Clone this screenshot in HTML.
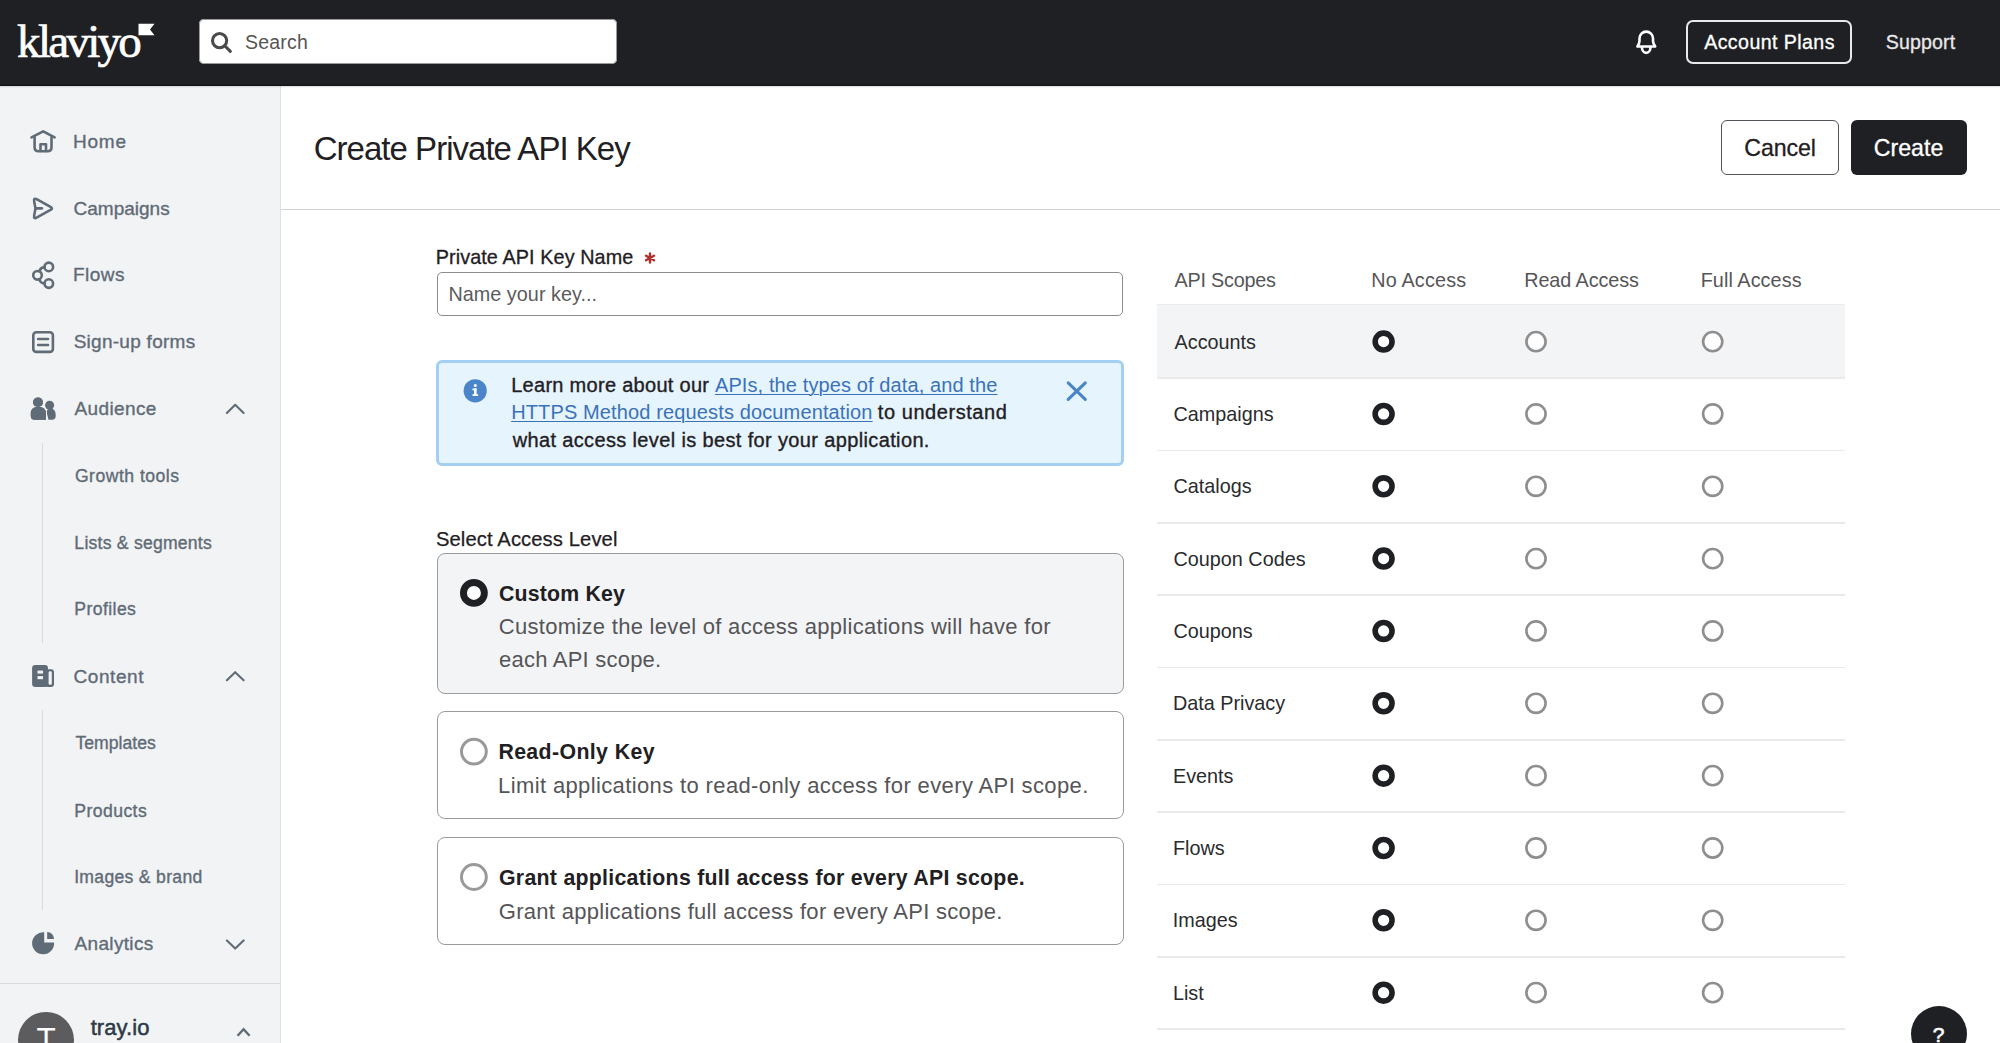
<!DOCTYPE html>
<html><head><meta charset="utf-8"><style>
html,body{margin:0;padding:0;width:2000px;height:1043px;overflow:hidden;background:#fff}
.t{position:absolute;white-space:nowrap}
</style></head><body>
<div style="position:absolute;left:0;top:0;width:2000px;height:86px;background:#1f2023;box-shadow:inset 0 -2px 1px -1px #111214"></div>
<div class="t " style="left:17.10px;top:11.50px;font:400 47px/59px 'Liberation Serif', serif;letter-spacing:-2.715px;color:#ffffff;-webkit-text-stroke:0.7px #fff">klaviyo</div>
<svg style="position:absolute;left:0;top:0" width="200" height="86"><polygon points="138.5,23.7 154.5,23.7 150,29.5 154.5,35.2 138.5,35.2" fill="#fff"/></svg>
<div style="position:absolute;left:199px;top:19.3px;width:417.5px;height:44.3px;background:#fff;border-radius:5px;box-shadow:0 0 0 1px #9a9a9a inset"></div>
<svg style="position:absolute;left:205px;top:26px" width="32" height="32"><circle cx="14.6" cy="14.6" r="7.1" fill="none" stroke="#4a4a4a" stroke-width="3.1"/><line x1="20" y1="20" x2="25.3" y2="25.3" stroke="#4a4a4a" stroke-width="3.1" stroke-linecap="round"/></svg>
<div class="t " style="left:245.11px;top:29.50px;font:400 19.5px/25px 'Liberation Sans', sans-serif;letter-spacing:0.173px;color:#555555;">Search</div>
<svg style="position:absolute;left:1630px;top:25px" width="32" height="32"><path d="M9.5 16 L9.5 13.35 A6.75 6.75 0 0 1 23 13.35 L23 16 Q23 18.3 25.2 21.5 L7.4 21.5 Q9.5 18.3 9.5 16 Z" fill="none" stroke="#fff" stroke-width="2.6" stroke-linejoin="round"/><path d="M11.9 22 C11.9 25.6 13.9 27.9 16.2 27.9 C18.5 27.9 20.5 25.6 20.5 22" fill="none" stroke="#fff" stroke-width="2.6"/></svg>
<div style="position:absolute;left:1686px;top:20px;width:166px;height:44px;box-sizing:border-box;border:2px solid #e9e9e9;border-radius:7px"></div>
<div class="t " style="left:1704.16px;top:29.70px;font:400 19.6px/25px 'Liberation Sans', sans-serif;letter-spacing:0.421px;color:#ffffff;-webkit-text-stroke:0.3px #fff">Account Plans</div>
<div class="t " style="left:1885.81px;top:29.70px;font:400 19.6px/25px 'Liberation Sans', sans-serif;letter-spacing:0.131px;color:#e9e9e9;-webkit-text-stroke:0.3px #e9e9e9">Support</div>
<div style="position:absolute;left:0;top:86px;width:280px;height:957px;background:#f2f3f5;border-right:1px solid #dde0e4"></div>
<div style="position:absolute;left:0;top:86px;width:2000px;height:2px;background:linear-gradient(rgba(0,0,0,0.13),rgba(0,0,0,0))"></div>
<div class="t " style="left:72.94px;top:129.80px;font:400 19px/24px 'Liberation Sans', sans-serif;letter-spacing:0.807px;color:#5f6b76;-webkit-text-stroke:0.35px #5f6b76">Home</div>
<div class="t " style="left:73.54px;top:196.50px;font:400 19px/24px 'Liberation Sans', sans-serif;letter-spacing:0.000px;color:#5f6b76;-webkit-text-stroke:0.35px #5f6b76">Campaigns</div>
<div class="t " style="left:72.94px;top:263.40px;font:400 19px/24px 'Liberation Sans', sans-serif;letter-spacing:0.457px;color:#5f6b76;-webkit-text-stroke:0.35px #5f6b76">Flows</div>
<div class="t " style="left:73.64px;top:330.20px;font:400 19px/24px 'Liberation Sans', sans-serif;letter-spacing:0.273px;color:#5f6b76;-webkit-text-stroke:0.35px #5f6b76">Sign-up forms</div>
<div class="t " style="left:74.46px;top:397.10px;font:400 19px/24px 'Liberation Sans', sans-serif;letter-spacing:0.393px;color:#5f6b76;-webkit-text-stroke:0.35px #5f6b76">Audience</div>
<div class="t " style="left:73.54px;top:664.50px;font:400 19px/24px 'Liberation Sans', sans-serif;letter-spacing:0.560px;color:#5f6b76;-webkit-text-stroke:0.35px #5f6b76">Content</div>
<div class="t " style="left:74.46px;top:932.20px;font:400 19px/24px 'Liberation Sans', sans-serif;letter-spacing:0.349px;color:#5f6b76;-webkit-text-stroke:0.35px #5f6b76">Analytics</div>
<div class="t " style="left:74.91px;top:464.60px;font:400 17.6px/22px 'Liberation Sans', sans-serif;letter-spacing:0.484px;color:#5f6b76;-webkit-text-stroke:0.35px #5f6b76">Growth tools</div>
<div class="t " style="left:74.36px;top:531.80px;font:400 17.6px/22px 'Liberation Sans', sans-serif;letter-spacing:0.231px;color:#5f6b76;-webkit-text-stroke:0.35px #5f6b76">Lists &amp; segments</div>
<div class="t " style="left:74.36px;top:598.40px;font:400 17.6px/22px 'Liberation Sans', sans-serif;letter-spacing:0.413px;color:#5f6b76;-webkit-text-stroke:0.35px #5f6b76">Profiles</div>
<div class="t " style="left:75.40px;top:732.40px;font:400 17.6px/22px 'Liberation Sans', sans-serif;letter-spacing:0.033px;color:#5f6b76;-webkit-text-stroke:0.35px #5f6b76">Templates</div>
<div class="t " style="left:74.36px;top:799.60px;font:400 17.6px/22px 'Liberation Sans', sans-serif;letter-spacing:0.418px;color:#5f6b76;-webkit-text-stroke:0.35px #5f6b76">Products</div>
<div class="t " style="left:74.18px;top:866.20px;font:400 17.6px/22px 'Liberation Sans', sans-serif;letter-spacing:0.301px;color:#5f6b76;-webkit-text-stroke:0.35px #5f6b76">Images &amp; brand</div>
<div style="position:absolute;left:42px;top:442.5px;width:1px;height:200px;background:#d8dbdf"></div>
<div style="position:absolute;left:42px;top:709.5px;width:1px;height:200px;background:#d8dbdf"></div>
<svg style="position:absolute;left:0;top:86px" width="280" height="957"><path d="M31.5 51.3 L43.2 45.3 L54.6 51.3" fill="none" stroke="#5f6b76" stroke-width="2.6" stroke-linecap="round" stroke-linejoin="round"/><path d="M34.6 51.5 L34.6 61.3 Q34.6 65.3 38.6 65.3 L47.5 65.3 Q51.5 65.3 51.5 61.3 L51.5 51.5" fill="none" stroke="#5f6b76" stroke-width="2.6" stroke-linecap="round" stroke-linejoin="round"/><path d="M40.5 65 L40.5 58.3 L46 58.3 L46 65" fill="none" stroke="#5f6b76" stroke-width="2.6" stroke-linecap="round" stroke-linejoin="round"/><path d="M35.50 122.40 L34.18 115.43 Q33.40 111.30 37.07 113.35 L50.51 120.84 Q53.30 122.40 50.51 123.96 L37.07 131.45 Q33.40 133.50 34.18 129.37 Z" fill="none" stroke="#5f6b76" stroke-width="2.6" stroke-linecap="round" stroke-linejoin="round"/><path d="M35.6 122.4 L41.9 122.4" fill="none" stroke="#5f6b76" stroke-width="2.6" stroke-linecap="round" stroke-linejoin="round"/><circle cx="48.8" cy="180.9" r="4.3" fill="none" stroke="#5f6b76" stroke-width="2.6" stroke-linecap="round" stroke-linejoin="round"/><circle cx="37.5" cy="189.3" r="4.3" fill="none" stroke="#5f6b76" stroke-width="2.6" stroke-linecap="round" stroke-linejoin="round"/><circle cx="48.8" cy="197.6" r="4.3" fill="none" stroke="#5f6b76" stroke-width="2.6" stroke-linecap="round" stroke-linejoin="round"/><path d="M39.4 185.4 Q40.4 181.3 44.5 181.1 M39.4 193.2 Q40.4 197.3 44.5 197.5" fill="none" stroke="#5f6b76" stroke-width="2.6" stroke-linecap="round" stroke-linejoin="round"/><rect x="33.3" y="246.3" width="19.6" height="19.6" rx="3" fill="none" stroke="#5f6b76" stroke-width="2.6" stroke-linecap="round" stroke-linejoin="round"/><path d="M38.2 253 L48 253 M38.2 259 L48 259" fill="none" stroke="#5f6b76" stroke-width="2.6" stroke-linecap="round" stroke-linejoin="round"/><circle cx="49.6" cy="319.2" r="4.5" fill="#5f6b76"/><path d="M48.5 333.7 L52 333.7 Q55.7 333.7 55.7 330 L55.7 329 Q55.7 322.5 50.5 322.5 Q47.2 322.5 46.5 326 Z" fill="#5f6b76"/><g stroke="#f2f3f5" stroke-width="2.2" fill="#5f6b76" paint-order="stroke"><circle cx="38" cy="316.3" r="4.9"/><path d="M30.8 329.9 L30.8 327.5 Q30.8 320.7 38.3 320.7 Q45.9 320.7 45.9 327.5 L45.9 333.7 L34.6 333.7 Q30.8 333.7 30.8 329.9 Z"/></g><circle cx="38" cy="316.3" r="4.9" fill="#5f6b76"/><path d="M30.8 329.9 L30.8 327.5 Q30.8 320.7 38.3 320.7 Q45.9 320.7 45.9 327.5 L45.9 333.7 L34.6 333.7 Q30.8 333.7 30.8 329.9 Z" fill="#5f6b76"/><rect x="45" y="583.2" width="9" height="17.7" rx="3" fill="#5f6b76"/><rect x="48.6" y="585.3" width="3.2" height="13.5" rx="1.4" fill="#f2f3f5"/><rect x="32.1" y="579" width="15.9" height="21.9" rx="3.2" fill="#5f6b76"/><rect x="37.5" y="584.6" width="5.5" height="3" fill="#f2f3f5"/><rect x="37.5" y="590.1" width="5.5" height="3.1" fill="#f2f3f5"/><path d="M44.2 846.26 L44.2 856.4 L54.07 856.4 A11 11 0 1 1 44.2 846.26 Z" fill="#5f6b76"/><path d="M47.2 852.9 L47.2 846.1 A6.8 6.8 0 0 1 54 852.9 Z" fill="#5f6b76"/><path d="M226.9 326.9 L235.2 318.8 L243.6 326.9 M226.9 594.3 L235.2 586.2 L243.6 594.3 M226.9 854.4 L235.2 862.6 L243.6 854.4" fill="none" stroke="#5f6b76" stroke-width="2.1" stroke-linecap="round" stroke-linejoin="round"/></svg>
<div style="position:absolute;left:0;top:983px;width:280px;height:1px;background:#d9dcdf"></div>
<div style="position:absolute;left:18.2px;top:1012px;width:55.7px;height:55.7px;border-radius:50%;background:#5c5c5e"></div>
<div class="t " style="left:36.39px;top:1019.00px;font:400 31.5px/40px 'Liberation Sans', sans-serif;letter-spacing:0.000px;color:#ffffff;">T</div>
<div class="t " style="left:90.67px;top:1013.80px;font:400 22px/28px 'Liberation Sans', sans-serif;letter-spacing:0.075px;color:#2d3a45;-webkit-text-stroke:0.5px #2d3a45">tray.io</div>
<svg style="position:absolute;left:230px;top:1020px" width="30" height="23"><path d="M7.6 15.8 L13.6 9.3 L19.6 15.8" fill="none" stroke="#5f6b76" stroke-width="2.4"/></svg>
<div class="t " style="left:313.72px;top:127.70px;font:400 33px/42px 'Liberation Sans', sans-serif;letter-spacing:-0.975px;color:#1f2023;">Create Private API Key</div>
<div style="position:absolute;left:1721px;top:120px;width:118px;height:55px;box-sizing:border-box;border:1.7px solid #505357;border-radius:6px;background:#fff"></div>
<div class="t " style="left:1744.22px;top:133.70px;font:400 23.2px/29px 'Liberation Sans', sans-serif;letter-spacing:-0.077px;color:#1f2023;-webkit-text-stroke:0.3px #1f2023">Cancel</div>
<div style="position:absolute;left:1851px;top:120px;width:116px;height:55px;border-radius:6px;background:#1f2023"></div>
<div class="t " style="left:1873.72px;top:133.70px;font:400 23.2px/29px 'Liberation Sans', sans-serif;letter-spacing:-0.005px;color:#ffffff;-webkit-text-stroke:0.3px #fff">Create</div>
<div style="position:absolute;left:281px;top:208.5px;width:1719px;height:1.5px;background:#cfd4da"></div>
<div class="t " style="left:435.68px;top:244.90px;font:400 19.8px/25px 'Liberation Sans', sans-serif;letter-spacing:0.102px;color:#1f2023;-webkit-text-stroke:0.3px #1f2023">Private API Key Name</div>
<svg style="position:absolute;left:638.9px;top:246.5px" width="22" height="22"><path d="M11.00 6.40 L11.00 15.60 M7.02 8.70 L14.98 13.30 M14.98 8.70 L7.02 13.30" stroke="#b3302a" stroke-width="2.4" stroke-linecap="round"/></svg>
<div style="position:absolute;left:437px;top:272px;width:686px;height:44px;box-sizing:border-box;border:1.5px solid #8d8d8d;border-radius:5px;background:#fff"></div>
<div class="t " style="left:448.38px;top:281.80px;font:400 19.8px/25px 'Liberation Sans', sans-serif;letter-spacing:0.045px;color:#5b5b5b;">Name your key...</div>
<div style="position:absolute;left:436px;top:360px;width:688px;height:106px;box-sizing:border-box;border:3px solid #a3d0f2;border-radius:6px;background:#e6f4fd"></div>
<svg style="position:absolute;left:463px;top:379px" width="25" height="25"><circle cx="12.2" cy="11.8" r="11.6" fill="#4a85c9"/><rect x="11" y="9.5" width="2.6" height="7.2" fill="#fff"/><rect x="9.5" y="9.5" width="4" height="1.8" fill="#fff"/><rect x="9.5" y="15.2" width="5.6" height="1.8" fill="#fff"/><circle cx="12.3" cy="6.4" r="1.5" fill="#fff"/></svg>
<svg style="position:absolute;left:1061.7px;top:377px" width="30" height="30"><path d="M6.2 5.8 L23.3 22.3 M23.3 5.8 L6.2 22.3" stroke="#4a85c9" stroke-width="3.1" stroke-linecap="round"/></svg>
<div class="t " style="left:511.16px;top:373.10px;font:400 20px/25px 'Liberation Sans', sans-serif;letter-spacing:0.291px;color:#1f2023;-webkit-text-stroke:0.35px #1f2023">Learn more about our</div>
<div class="t " style="left:714.96px;top:373.10px;font:400 20px/25px 'Liberation Sans', sans-serif;letter-spacing:0.108px;color:#3a72ba;text-decoration:underline;text-decoration-thickness:1.3px;text-underline-offset:2px">APIs, the types of data, and the</div>
<div class="t " style="left:511.16px;top:400.40px;font:400 20px/25px 'Liberation Sans', sans-serif;letter-spacing:0.132px;color:#3a72ba;text-decoration:underline;text-decoration-thickness:1.3px;text-underline-offset:2px">HTTPS Method requests documentation</div>
<div class="t " style="left:877.80px;top:400.40px;font:400 20px/25px 'Liberation Sans', sans-serif;letter-spacing:0.556px;color:#1f2023;-webkit-text-stroke:0.35px #1f2023">to understand</div>
<div class="t " style="left:512.63px;top:428.10px;font:400 20px/25px 'Liberation Sans', sans-serif;letter-spacing:0.361px;color:#1f2023;-webkit-text-stroke:0.35px #1f2023">what access level is best for your application.</div>
<div class="t " style="left:435.98px;top:525.90px;font:400 20.2px/26px 'Liberation Sans', sans-serif;letter-spacing:0.106px;color:#1f2023;-webkit-text-stroke:0.25px #1f2023">Select Access Level</div>
<div style="position:absolute;left:436.5px;top:552.5px;width:687.5px;height:141.5px;box-sizing:border-box;border:1.6px solid #9a9b9d;border-radius:8px;background:#f3f4f6"></div>
<div style="position:absolute;left:436.5px;top:711.2px;width:687.5px;height:108px;box-sizing:border-box;border:1.6px solid #9a9b9d;border-radius:8px;background:#fff"></div>
<div style="position:absolute;left:436.5px;top:836.6px;width:687.5px;height:108px;box-sizing:border-box;border:1.6px solid #9a9b9d;border-radius:8px;background:#fff"></div>
<svg style="position:absolute;left:455px;top:574px" width="38" height="320"><circle cx="18.9" cy="18.9" r="10.45" fill="#fff" stroke="#1f2023" stroke-width="6.9"/><circle cx="18.9" cy="177.6" r="12.4" fill="#fff" stroke="#999" stroke-width="3"/><circle cx="18.9" cy="303" r="12.4" fill="#fff" stroke="#999" stroke-width="3"/></svg>
<div class="t " style="left:499.03px;top:580.60px;font:700 21.3px/27px 'Liberation Sans', sans-serif;letter-spacing:0.168px;color:#1f2023;">Custom Key</div>
<div class="t " style="left:498.78px;top:612.80px;font:400 22px/28px 'Liberation Sans', sans-serif;letter-spacing:0.295px;color:#555558;">Customize the level of access applications will have for</div>
<div class="t " style="left:498.97px;top:646.10px;font:400 22px/28px 'Liberation Sans', sans-serif;letter-spacing:0.231px;color:#555558;">each API scope.</div>
<div class="t " style="left:498.38px;top:739.40px;font:700 21.3px/27px 'Liberation Sans', sans-serif;letter-spacing:0.386px;color:#1f2023;">Read-Only Key</div>
<div class="t " style="left:498.10px;top:772.00px;font:400 22px/28px 'Liberation Sans', sans-serif;letter-spacing:0.372px;color:#555558;">Limit applications to read-only access for every API scope.</div>
<div class="t " style="left:499.03px;top:864.50px;font:700 21.3px/27px 'Liberation Sans', sans-serif;letter-spacing:0.279px;color:#1f2023;">Grant applications full access for every API scope.</div>
<div class="t " style="left:498.79px;top:897.50px;font:400 22px/28px 'Liberation Sans', sans-serif;letter-spacing:0.288px;color:#555558;">Grant applications full access for every API scope.</div>
<div class="t " style="left:1174.56px;top:267.75px;font:400 19.8px/25px 'Liberation Sans', sans-serif;letter-spacing:-0.223px;color:#555558;">API Scopes</div>
<div class="t " style="left:1371.28px;top:267.75px;font:400 19.8px/25px 'Liberation Sans', sans-serif;letter-spacing:0.176px;color:#555558;">No Access</div>
<div class="t " style="left:1524.18px;top:267.75px;font:400 19.8px/25px 'Liberation Sans', sans-serif;letter-spacing:-0.061px;color:#555558;">Read Access</div>
<div class="t " style="left:1700.68px;top:267.75px;font:400 19.8px/25px 'Liberation Sans', sans-serif;letter-spacing:0.082px;color:#555558;">Full Access</div>
<div style="position:absolute;left:1157px;top:304.5px;width:688px;height:73.4px;background:#f3f4f6"></div>
<div class="t " style="left:1174.56px;top:329.50px;font:400 19.8px/25px 'Liberation Sans', sans-serif;letter-spacing:0.000px;color:#2a2b2d;">Accounts</div>
<div style="position:absolute;left:1157px;top:377.40px;width:688px;height:1.5px;background:#e9eaec"></div>
<div class="t " style="left:1173.59px;top:401.84px;font:400 19.8px/25px 'Liberation Sans', sans-serif;letter-spacing:0.000px;color:#2a2b2d;">Campaigns</div>
<div style="position:absolute;left:1157px;top:449.74px;width:688px;height:1.5px;background:#e9eaec"></div>
<div class="t " style="left:1173.59px;top:474.18px;font:400 19.8px/25px 'Liberation Sans', sans-serif;letter-spacing:0.000px;color:#2a2b2d;">Catalogs</div>
<div style="position:absolute;left:1157px;top:522.08px;width:688px;height:1.5px;background:#e9eaec"></div>
<div class="t " style="left:1173.59px;top:546.52px;font:400 19.8px/25px 'Liberation Sans', sans-serif;letter-spacing:0.000px;color:#2a2b2d;">Coupon Codes</div>
<div style="position:absolute;left:1157px;top:594.42px;width:688px;height:1.5px;background:#e9eaec"></div>
<div class="t " style="left:1173.59px;top:618.86px;font:400 19.8px/25px 'Liberation Sans', sans-serif;letter-spacing:0.000px;color:#2a2b2d;">Coupons</div>
<div style="position:absolute;left:1157px;top:666.76px;width:688px;height:1.5px;background:#e9eaec"></div>
<div class="t " style="left:1172.98px;top:691.20px;font:400 19.8px/25px 'Liberation Sans', sans-serif;letter-spacing:0.000px;color:#2a2b2d;">Data Privacy</div>
<div style="position:absolute;left:1157px;top:739.10px;width:688px;height:1.5px;background:#e9eaec"></div>
<div class="t " style="left:1172.98px;top:763.54px;font:400 19.8px/25px 'Liberation Sans', sans-serif;letter-spacing:0.000px;color:#2a2b2d;">Events</div>
<div style="position:absolute;left:1157px;top:811.44px;width:688px;height:1.5px;background:#e9eaec"></div>
<div class="t " style="left:1172.98px;top:835.88px;font:400 19.8px/25px 'Liberation Sans', sans-serif;letter-spacing:0.000px;color:#2a2b2d;">Flows</div>
<div style="position:absolute;left:1157px;top:883.78px;width:688px;height:1.5px;background:#e9eaec"></div>
<div class="t " style="left:1172.77px;top:908.22px;font:400 19.8px/25px 'Liberation Sans', sans-serif;letter-spacing:0.000px;color:#2a2b2d;">Images</div>
<div style="position:absolute;left:1157px;top:956.12px;width:688px;height:1.5px;background:#e9eaec"></div>
<div class="t " style="left:1172.98px;top:980.56px;font:400 19.8px/25px 'Liberation Sans', sans-serif;letter-spacing:0.000px;color:#2a2b2d;">List</div>
<div style="position:absolute;left:1157px;top:1028.46px;width:688px;height:1.5px;background:#e9eaec"></div>
<svg style="position:absolute;left:1157px;top:300px" width="688" height="743"><circle cx="226.6" cy="41.60" r="8.45" fill="#fff" stroke="#1f2023" stroke-width="5.6"/><circle cx="379" cy="41.60" r="9.6" fill="#fff" stroke="#8e8e8e" stroke-width="2.6"/><circle cx="555.7" cy="41.60" r="9.6" fill="#fff" stroke="#8e8e8e" stroke-width="2.6"/><circle cx="226.6" cy="113.94" r="8.45" fill="#fff" stroke="#1f2023" stroke-width="5.6"/><circle cx="379" cy="113.94" r="9.6" fill="#fff" stroke="#8e8e8e" stroke-width="2.6"/><circle cx="555.7" cy="113.94" r="9.6" fill="#fff" stroke="#8e8e8e" stroke-width="2.6"/><circle cx="226.6" cy="186.28" r="8.45" fill="#fff" stroke="#1f2023" stroke-width="5.6"/><circle cx="379" cy="186.28" r="9.6" fill="#fff" stroke="#8e8e8e" stroke-width="2.6"/><circle cx="555.7" cy="186.28" r="9.6" fill="#fff" stroke="#8e8e8e" stroke-width="2.6"/><circle cx="226.6" cy="258.62" r="8.45" fill="#fff" stroke="#1f2023" stroke-width="5.6"/><circle cx="379" cy="258.62" r="9.6" fill="#fff" stroke="#8e8e8e" stroke-width="2.6"/><circle cx="555.7" cy="258.62" r="9.6" fill="#fff" stroke="#8e8e8e" stroke-width="2.6"/><circle cx="226.6" cy="330.96" r="8.45" fill="#fff" stroke="#1f2023" stroke-width="5.6"/><circle cx="379" cy="330.96" r="9.6" fill="#fff" stroke="#8e8e8e" stroke-width="2.6"/><circle cx="555.7" cy="330.96" r="9.6" fill="#fff" stroke="#8e8e8e" stroke-width="2.6"/><circle cx="226.6" cy="403.30" r="8.45" fill="#fff" stroke="#1f2023" stroke-width="5.6"/><circle cx="379" cy="403.30" r="9.6" fill="#fff" stroke="#8e8e8e" stroke-width="2.6"/><circle cx="555.7" cy="403.30" r="9.6" fill="#fff" stroke="#8e8e8e" stroke-width="2.6"/><circle cx="226.6" cy="475.64" r="8.45" fill="#fff" stroke="#1f2023" stroke-width="5.6"/><circle cx="379" cy="475.64" r="9.6" fill="#fff" stroke="#8e8e8e" stroke-width="2.6"/><circle cx="555.7" cy="475.64" r="9.6" fill="#fff" stroke="#8e8e8e" stroke-width="2.6"/><circle cx="226.6" cy="547.98" r="8.45" fill="#fff" stroke="#1f2023" stroke-width="5.6"/><circle cx="379" cy="547.98" r="9.6" fill="#fff" stroke="#8e8e8e" stroke-width="2.6"/><circle cx="555.7" cy="547.98" r="9.6" fill="#fff" stroke="#8e8e8e" stroke-width="2.6"/><circle cx="226.6" cy="620.32" r="8.45" fill="#fff" stroke="#1f2023" stroke-width="5.6"/><circle cx="379" cy="620.32" r="9.6" fill="#fff" stroke="#8e8e8e" stroke-width="2.6"/><circle cx="555.7" cy="620.32" r="9.6" fill="#fff" stroke="#8e8e8e" stroke-width="2.6"/><circle cx="226.6" cy="692.66" r="8.45" fill="#fff" stroke="#1f2023" stroke-width="5.6"/><circle cx="379" cy="692.66" r="9.6" fill="#fff" stroke="#8e8e8e" stroke-width="2.6"/><circle cx="555.7" cy="692.66" r="9.6" fill="#fff" stroke="#8e8e8e" stroke-width="2.6"/></svg>
<div style="position:absolute;left:1157px;top:304px;width:688px;height:1px;background:#ececee"></div>
<div style="position:absolute;left:1911px;top:1006px;width:56px;height:56px;border-radius:50%;background:#1f2023"></div>
<div class="t " style="left:1932.74px;top:1021.00px;font:400 21px/27px 'Liberation Sans', sans-serif;letter-spacing:0.000px;color:#ffffff;-webkit-text-stroke:0.6px #fff">?</div>
</body></html>
